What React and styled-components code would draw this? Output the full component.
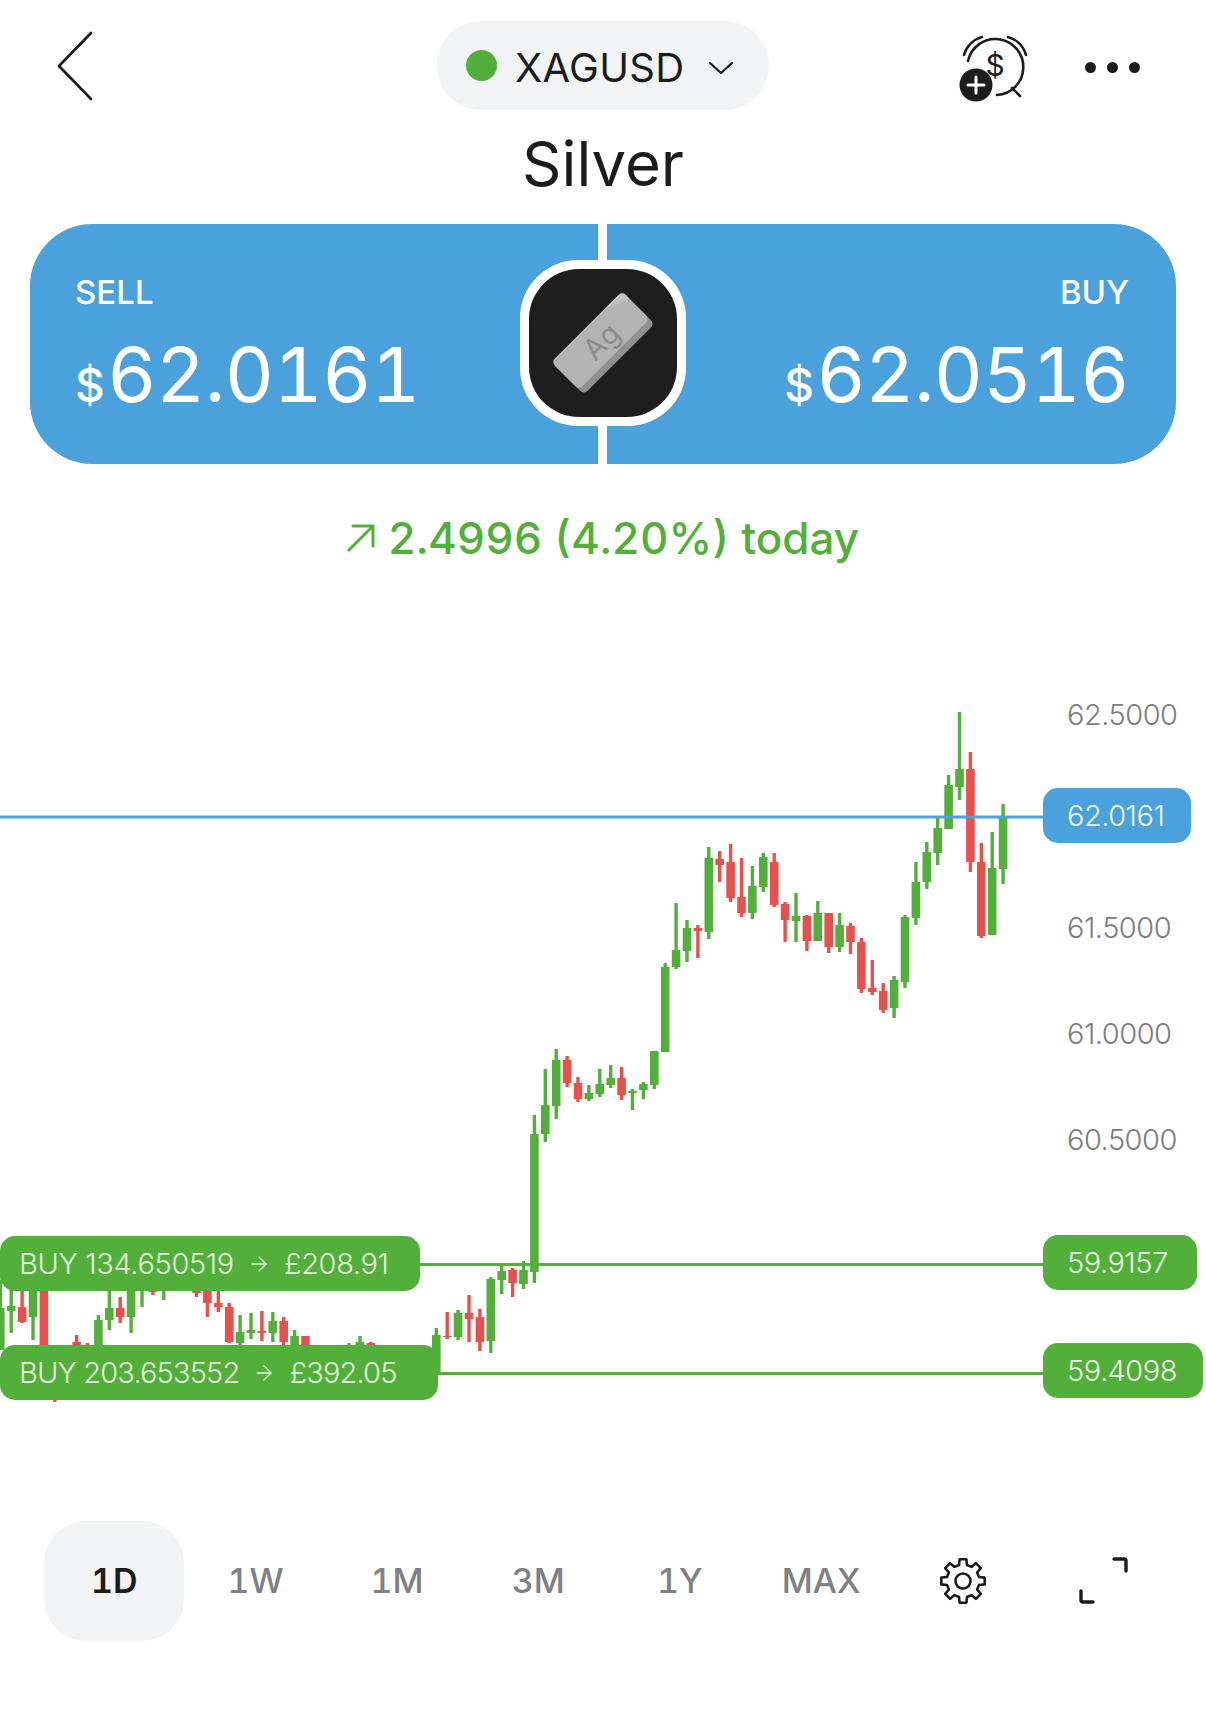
import React from 'react';
import styled, { createGlobalStyle } from 'styled-components';
import { ArrowRight } from 'lucide-react';

const GREEN = '#52b03a';
const RED = '#e8504b';
const BLUE = '#4aa1db';
const INK = '#1c1c1c';
const CHART_TOP = 600;
const CHART_HEIGHT = 921;

const GlobalStyle = createGlobalStyle`
  html, body {
    margin: 0;
    padding: 0;
    background: #fff;
  }
  body {
    font-family: Inter, "Liberation Sans", sans-serif;
    color: ${INK};
  }
`;

const Page = styled.div`
  width: 1206px;
  height: 1725px;
  overflow: hidden;
  display: flex;
  flex-direction: column;
  background: #fff;
`;

const TopBar = styled.header`
  display: grid;
  grid-template-columns: 1fr auto 1fr;
  align-items: center;
  height: 89px;
  padding-top: 21px;
`;

const BackButton = styled.div`
  display: flex;
  padding-left: 56px;
`;

const SymbolPill = styled.div`
  display: flex;
  align-items: center;
  width: 332px;
  height: 89px;
  box-sizing: border-box;
  padding-left: 29px;
  border-radius: 44px;
  background: #f2f3f5;
`;

const StatusDot = styled.span`
  width: 31px;
  height: 31px;
  border-radius: 50%;
  background: ${GREEN};
  margin-right: 18px;
`;

const SymbolName = styled.span`
  font-size: 40px;
  font-weight: 400;
  letter-spacing: 0.3px;
  margin-right: 24px;
  padding-top: 4px;
`;

const Chevron = styled.svg`
  margin-top: 4px;
`;

const TopActions = styled.div`
  display: flex;
  align-items: center;
  padding: 3px 0 0 190px;
  gap: 56px;
`;

const Dots = styled.div`
  display: flex;
  gap: 11px;
  span {
    width: 11px;
    height: 11px;
    border-radius: 50%;
    background: ${INK};
  }
`;

const Title = styled.h1`
  margin: 0;
  height: 114px;
  padding-top: 6px;
  box-sizing: border-box;
  font-size: 61.5px;
  font-weight: 400;
  line-height: 96px;
  text-align: center;
`;

const QuoteRow = styled.section`
  position: relative;
  display: flex;
  gap: 9px;
  height: 240px;
  margin: 0 30px;
`;

const QuoteButton = styled.div`
  flex: 1;
  display: flex;
  flex-direction: column;
  align-items: ${(p) => (p.$side === 'sell' ? 'flex-start' : 'flex-end')};
  box-sizing: border-box;
  padding: 48px ${(p) => (p.$side === 'sell' ? '0 0 45px' : '47px 0 0')};
  background: ${BLUE};
  color: #fff;
  border-radius: ${(p) => (p.$side === 'sell' ? '62px 0 0 62px' : '0 62px 62px 0')};
`;

const QuoteLabel = styled.span`
  font-size: 33px;
  font-weight: 500;
  line-height: 40px;
`;

const QuotePrice = styled.div`
  display: flex;
  align-items: baseline;
  margin-top: 16px;
  font-size: 76px;
  line-height: 92px;
  font-weight: 400;
  letter-spacing: -0.5px;
  font-feature-settings: 'tnum';
  small {
    font-size: 46px;
    font-weight: 500;
    margin-right: 3px;
  }
`;

const Medallion = styled.div`
  position: absolute;
  left: 490px;
  top: 36px;
  width: 166px;
  height: 166px;
  display: flex;
  align-items: center;
  justify-content: center;
  border-radius: 58px;
  background: #fff;
`;

const MedallionInner = styled.div`
  width: 148px;
  height: 148px;
  border-radius: 50px;
  background: #1e1e1e;
  display: flex;
  align-items: center;
  justify-content: center;
`;

const ChangeLine = styled.div`
  display: flex;
  align-items: center;
  justify-content: center;
  gap: 13px;
  height: 52px;
  margin: 48px 0 36px;
  color: ${GREEN};
  font-size: 44px;
  font-weight: 500;
  font-feature-settings: 'tnum';
`;

const Chart = styled.section`
  position: relative;
  height: ${CHART_HEIGHT}px;
`;

const ChartCanvas = styled.svg`
  position: absolute;
  inset: 0;
  width: 100%;
  height: 100%;
`;

const AxisLabel = styled.span`
  position: absolute;
  left: 1067px;
  top: ${(p) => p.$y - CHART_TOP - 18}px;
  font-size: 29px;
  line-height: 36px;
  font-weight: 300;
  letter-spacing: -0.5px;
  color: #7d7d7d;
`;

const PriceTag = styled.span`
  position: absolute;
  left: 1043px;
  top: ${(p) => p.$y - CHART_TOP}px;
  width: ${(p) => p.$w}px;
  height: 55px;
  box-sizing: border-box;
  padding-left: 24px;
  display: flex;
  align-items: center;
  border-radius: 15px;
  background: ${(p) => p.$bg};
  color: #eef9ea;
  font-size: 29px;
  font-weight: 300;
  letter-spacing: -0.5px;
`;

const OrderTag = styled.div`
  position: absolute;
  left: 0;
  top: ${(p) => p.$y - CHART_TOP}px;
  width: ${(p) => p.$w}px;
  height: 55px;
  box-sizing: border-box;
  padding-left: 19px;
  display: flex;
  align-items: center;
  gap: 13px;
  white-space: nowrap;
  border-radius: 15px;
  background: ${GREEN};
  color: #e4f5df;
  font-size: 29px;
  font-weight: 300;
  letter-spacing: ${(p) => p.$tracking}px;
`;

const RangeBar = styled.nav`
  display: grid;
  grid-template-columns: repeat(8, 141.4px);
  margin-left: 43.5px;
  height: 120px;
  align-items: center;
  justify-items: center;
`;

const RangeTab = styled.div`
  width: 140px;
  height: 120px;
  box-sizing: border-box;
  padding-bottom: 2px;
  display: flex;
  align-items: center;
  justify-content: center;
  border-radius: 42px;
  font-size: 34px;
  font-weight: ${(p) => (p.$active ? 600 : 500)};
  font-feature-settings: 'tnum';
  background: ${(p) => (p.$active ? '#f2f3f5' : 'transparent')};
  color: ${(p) => (p.$active ? INK : '#7e8083')};
`;

// k = slot on the time axis, then wick top/bottom and body top/bottom in page px
const candles = [
  [-40, 'g', 1280, 1350, 1308, 1350], [-39, 'g', 1285, 1333, 1306, 1311], [-38, 'r', 1285, 1323, 1307, 1322],
  [-37, 'g', 1285, 1340, 1285, 1317], [-36, 'r', 1285, 1350, 1285, 1350], [-35, 'r', 1380, 1402, 1380, 1395],
  [-33, 'r', 1335, 1350, 1342, 1350], [-32, 'r', 1343, 1350, 1345, 1350], [-31, 'g', 1315, 1350, 1320, 1350],
  [-30, 'g', 1285, 1330, 1308, 1320], [-29, 'r', 1297, 1323, 1308, 1317], [-28, 'g', 1285, 1333, 1285, 1317],
  [-27, 'g', 1285, 1307, 1285, 1290], [-26, 'r', 1285, 1295, 1285, 1292], [-25, 'g', 1285, 1300, 1285, 1290],
  [-22, 'r', 1285, 1297, 1285, 1293], [-21, 'r', 1285, 1317, 1285, 1303], [-20, 'r', 1285, 1312, 1303, 1307],
  [-19, 'r', 1303, 1343, 1307, 1342], [-18, 'g', 1315, 1345, 1332, 1343], [-17, 'g', 1313, 1339, 1330, 1333],
  [-16, 'r', 1311, 1341, 1331, 1333], [-15, 'g', 1312, 1342, 1321, 1333], [-14, 'r', 1317, 1350, 1321, 1342],
  [-13, 'g', 1330, 1350, 1336, 1350], [-12, 'r', 1336, 1350, 1336, 1350], [-8, 'g', 1343, 1350, 1345, 1350],
  [-7, 'g', 1336, 1350, 1342, 1350], [-6, 'r', 1342, 1350, 1343, 1350],
  [0, 'g', 1328, 1375, 1335, 1375], [1, 'r', 1312, 1339, 1336, 1337], [2, 'g', 1310, 1340, 1313, 1337],
  [3, 'r', 1295, 1342, 1313, 1319], [4, 'r', 1309, 1351, 1317, 1342], [5, 'g', 1277, 1353, 1279, 1341],
  [6, 'g', 1265, 1294, 1271, 1280], [7, 'r', 1268, 1297, 1270, 1283], [8, 'g', 1261, 1289, 1270, 1284],
  [9, 'g', 1115, 1283, 1134, 1272], [10, 'g', 1069, 1142, 1105, 1134], [11, 'g', 1049, 1119, 1060, 1106],
  [12, 'r', 1056, 1087, 1060, 1083], [13, 'r', 1077, 1102, 1083, 1099], [14, 'g', 1085, 1101, 1093, 1099],
  [15, 'g', 1069, 1097, 1084, 1094], [16, 'g', 1065, 1088, 1078, 1085], [17, 'r', 1067, 1100, 1078, 1095],
  [18, 'g', 1089, 1110, 1091, 1093], [19, 'g', 1082, 1099, 1084, 1090], [20, 'g', 1051, 1089, 1051, 1085],
  [21, 'g', 963, 1052, 967, 1052], [22, 'g', 903, 969, 950, 967], [23, 'g', 920, 962, 928, 951],
  [24, 'r', 925, 958, 928, 931], [25, 'g', 847, 939, 858, 932], [26, 'r', 851, 882, 859, 865],
  [27, 'r', 844, 902, 862, 898], [28, 'r', 858, 917, 897, 913], [29, 'g', 866, 919, 886, 913],
  [30, 'g', 853, 892, 857, 887], [31, 'r', 853, 907, 862, 905], [32, 'r', 902, 942, 904, 920],
  [33, 'g', 893, 942, 916, 921], [34, 'r', 915, 951, 916, 941], [35, 'g', 901, 941, 913, 941],
  [36, 'r', 913, 953, 913, 947], [37, 'g', 913, 952, 925, 947], [38, 'r', 923, 954, 926, 942],
  [39, 'r', 938, 993, 942, 989], [40, 'r', 960, 995, 988, 992], [41, 'r', 983, 1013, 991, 1010],
  [42, 'g', 976, 1018, 980, 1008], [43, 'g', 915, 988, 917, 982], [44, 'g', 862, 925, 882, 918],
  [45, 'g', 842, 889, 852, 882], [46, 'g', 818, 865, 828, 853], [47, 'g', 775, 829, 785, 829],
  [48, 'g', 712, 800, 769, 787], [49, 'r', 752, 872, 769, 862], [50, 'r', 843, 938, 862, 936],
  [51, 'g', 832, 935, 868, 935], [52, 'g', 804, 884, 818, 869],
];

function Candle({ k, tone, wickTop, wickBottom, bodyTop, bodyBottom }) {
  const x = 436.3 + 10.9 * k;
  const fill = tone === 'g' ? GREEN : RED;
  return (
    <g fill={fill}>
      <rect x={x - 1.7} y={wickTop} width="3.4" height={wickBottom - wickTop} />
      <rect x={x - 4.3} y={bodyTop} width="8.6" height={bodyBottom - bodyTop} />
    </g>
  );
}

function gearPath(cx, cy) {
  const pt = (r, deg) => {
    const a = (deg * Math.PI) / 180;
    return `${(cx + r * Math.cos(a)).toFixed(1)} ${(cy + r * Math.sin(a)).toFixed(1)}`;
  };
  let d = '';
  for (let i = 0; i < 8; i++) {
    const a = i * 45 - 90;
    d += `${i === 0 ? 'M' : 'L'}${pt(16.5, a - 14)} L${pt(22, a - 9)} L${pt(22, a + 9)} L${pt(16.5, a + 14)} `;
  }
  return `${d}Z`;
}

function BackIcon() {
  return (
    <svg width="38" height="70" viewBox="0 0 38 70" fill="none" stroke={INK} strokeWidth="2.6" strokeLinecap="round" strokeLinejoin="round">
      <path d="M35 2 L3 35 L35 68" />
    </svg>
  );
}

function AlarmIcon() {
  return (
    <svg width="70" height="70" viewBox="0 0 70 70" fill="none" stroke={INK} strokeWidth="2.6" strokeLinecap="round">
      <path d="M5 23 A26 26 0 0 1 23 5" />
      <path d="M49 5 A26 26 0 0 1 67 23" />
      <path d="M9 29 A28 28 0 1 1 38 63" />
      <path d="M53 56 L61 64" />
      <text x="36" y="44" fontFamily="Inter, sans-serif" fontSize="30" fontWeight="400" textAnchor="middle" fill={INK} stroke="none">$</text>
      <circle cx="17" cy="53" r="16.5" fill={INK} stroke="none" />
      <path d="M9 53 H25 M17 45 V61" stroke="#fff" strokeWidth="3" />
    </svg>
  );
}

function SilverBar() {
  return (
    <svg width="146" height="146" viewBox="0 0 146 146">
      <g transform="rotate(-45 73 73)">
        <rect x="23" y="50" width="100" height="46" rx="5" fill="#8f8f8f" />
        <rect x="23" y="50" width="100" height="39" rx="5" fill="#b3b3b3" />
        <path d="M98 50 H118 A5 5 0 0 1 123 55 V60 Z" fill="#c2c2c2" />
        <text x="73" y="81" fontFamily="Inter, sans-serif" fontSize="29" textAnchor="middle" fill="#8c8c8c">Ag</text>
      </g>
    </svg>
  );
}

function GearIcon() {
  return (
    <svg width="50" height="50" viewBox="0 0 50 50" fill="none" stroke={INK} strokeWidth="2.6" strokeLinejoin="round">
      <path d={gearPath(25, 25)} />
      <circle cx="25" cy="25" r="7.5" />
    </svg>
  );
}

function ExpandIcon() {
  return (
    <svg width="50" height="50" viewBox="0 0 50 50" fill="none" stroke={INK} strokeWidth="3.4" strokeLinecap="round" strokeLinejoin="round">
      <path d="M35 3 H45 A2 2 0 0 1 47 5 V15" />
      <path d="M2 35 V44 A2 2 0 0 0 4 46 H14" />
    </svg>
  );
}

const ranges = ['1D', '1W', '1M', '3M', '1Y', 'MAX'];

export default function App() {
  return (
    <Page>
      <GlobalStyle />
      <TopBar>
        <BackButton>
          <BackIcon />
        </BackButton>
        <SymbolPill>
          <StatusDot />
          <SymbolName>XAGUSD</SymbolName>
          <Chevron width="26" height="14" viewBox="0 0 26 14" fill="none" stroke={INK} strokeWidth="2.2" strokeLinecap="round" strokeLinejoin="round">
            <path d="M2 2 L13 12 L24 2" />
          </Chevron>
        </SymbolPill>
        <TopActions>
          <AlarmIcon />
          <Dots>
            <span />
            <span />
            <span />
          </Dots>
        </TopActions>
      </TopBar>

      <Title>Silver</Title>

      <QuoteRow>
        <QuoteButton $side="sell">
          <QuoteLabel>SELL</QuoteLabel>
          <QuotePrice>
            <small>$</small>62.0161
          </QuotePrice>
        </QuoteButton>
        <QuoteButton $side="buy">
          <QuoteLabel>BUY</QuoteLabel>
          <QuotePrice>
            <small>$</small>62.0516
          </QuotePrice>
        </QuoteButton>
        <Medallion>
          <MedallionInner>
            <SilverBar />
          </MedallionInner>
        </Medallion>
      </QuoteRow>

      <ChangeLine>
        <svg width="28" height="28" viewBox="0 0 28 28" fill="none" stroke={GREEN} strokeWidth="3" strokeLinecap="round" strokeLinejoin="round">
          <path d="M2 26 L26 2 M6 2 H26 V22" />
        </svg>
        2.4996 (4.20%) today
      </ChangeLine>

      <Chart>
        <ChartCanvas viewBox={`0 ${CHART_TOP} 1206 ${CHART_HEIGHT}`}>
          {candles.map(([k, tone, wickTop, wickBottom, bodyTop, bodyBottom]) => (
            <Candle key={k} k={k} tone={tone} wickTop={wickTop} wickBottom={wickBottom} bodyTop={bodyTop} bodyBottom={bodyBottom} />
          ))}
          <rect x="0" y="815.5" width="1050" height="3" fill={BLUE} />
          <rect x="400" y="1263" width="650" height="3" fill={GREEN} />
          <rect x="420" y="1372" width="630" height="3" fill={GREEN} />
        </ChartCanvas>

        <AxisLabel $y={715}>62.5000</AxisLabel>
        <AxisLabel $y={928}>61.5000</AxisLabel>
        <AxisLabel $y={1034}>61.0000</AxisLabel>
        <AxisLabel $y={1140}>60.5000</AxisLabel>

        <PriceTag $y={788} $w={148} $bg={BLUE}>62.0161</PriceTag>
        <PriceTag $y={1235} $w={154} $bg={GREEN}>59.9157</PriceTag>
        <PriceTag $y={1343} $w={160} $bg={GREEN}>59.4098</PriceTag>

        <OrderTag $y={1236} $w={420} $tracking={-0.36}>
          BUY 134.650519
          <ArrowRight size={24} strokeWidth={1.4} />
          £208.91
        </OrderTag>
        <OrderTag $y={1345} $w={438} $tracking={-0.84}>
          BUY 203.653552
          <ArrowRight size={24} strokeWidth={1.4} />
          £392.05
        </OrderTag>
      </Chart>

      <RangeBar>
        {ranges.map((r) => (
          <RangeTab key={r} $active={r === '1D'}>{r}</RangeTab>
        ))}
        <GearIcon />
        <ExpandIcon />
      </RangeBar>
    </Page>
  );
}
